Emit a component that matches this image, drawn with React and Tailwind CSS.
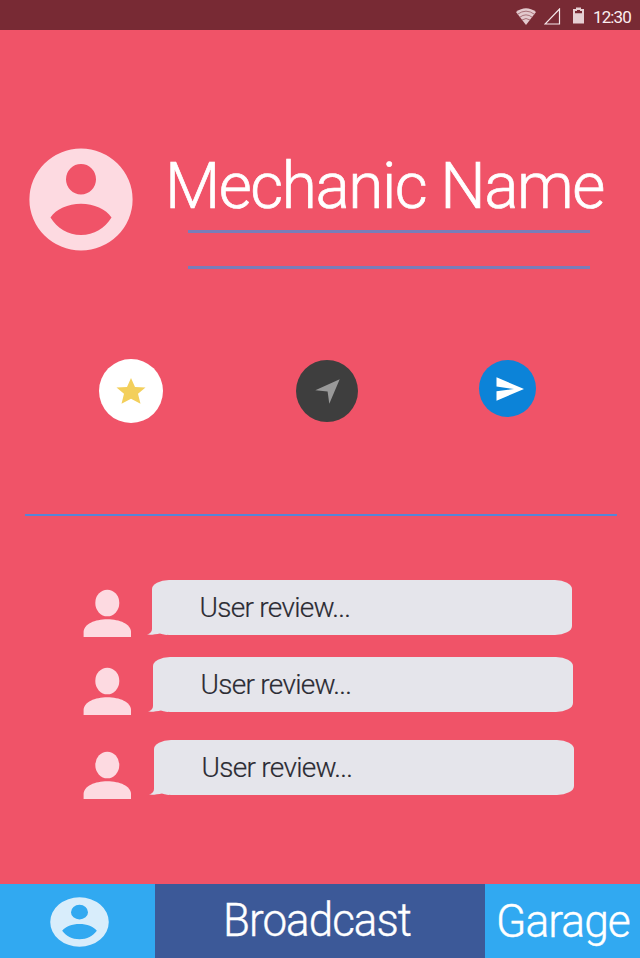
const ROBOTO = "font-['Roboto',sans-serif]";

function AccountCircle({ className }) {
  return (
    <svg className={className} viewBox="0 0 104 103" preserveAspectRatio="none" fill="currentColor">
      <path
        fillRule="evenodd"
        d="M52 0.5a51.6 51 0 1 0 0 102a51.6 51 0 1 0 0-102ZM52 16a15 15.2 0 1 1 0 30.4a15 15.2 0 1 1 0-30.4ZM21.5 69.5C27 61 39 55.700 52 55.700S77 61 82.500 69.500C76 80 65 87 52 87S28 80 21.500 69.500Z"
      />
    </svg>
  );
}

function Person() {
  return (
    <svg className="h-12 w-12 text-[#fddae1]" viewBox="0 0 48 48" fill="currentColor">
      <ellipse cx="24.300" cy="14" rx="12" ry="13.300" />
      <path d="M0.600 48V43C0.600 35 12 30.200 24.300 30.200S48 35 48 43V48Z" />
    </svg>
  );
}

function Review({ shift, top }) {
  return (
    <div className={`flex h-[57px] ${top}`}>
      <div className={shift.person}>
        <Person />
      </div>
      <div className={`relative flex h-[55px] w-[420px] items-center rounded-[17px/9px] bg-[#e5e5eb] pl-[47.5px] ${shift.bubble}`}>
        <svg className="absolute bottom-0 -left-[5px] h-5 w-6" viewBox="0 0 24 20" fill="#e5e5eb">
          <path d="M5 0V14C5 17 3 18.700 0 19.600C4 20 9 19.400 13.500 18.200L20 19.900L24 0Z" />
        </svg>
        <span className="relative text-[28px] leading-none font-light tracking-[-0.7px] whitespace-nowrap text-[#2b2b33] [-webkit-text-stroke:0.2px_#2b2b33]">
          User review...
        </span>
      </div>
    </div>
  );
}

const REVIEWS = [
  { person: "mt-[9px]", bubble: "ml-[21px]" },
  { person: "mt-[10px]", bubble: "ml-[22px]" },
  { person: "mt-[11px]", bubble: "ml-[23px]" },
];
const TOPS = ["", "mt-5", "mt-[26px]"];

export default function App() {
  return (
    <div className={`flex h-[958px] w-[640px] flex-col overflow-hidden bg-[#f05368] ${ROBOTO}`}>
      <header className="flex h-[30px] shrink-0 items-center bg-[#782a34] pl-[516px] text-[#e6cfd3]">
        <svg className="mt-[3px] h-[17px] w-[20px]" viewBox="0 0 20 17" fill="none">
          <path d="M0 4Q10-3.500 20 4L10 17Z" fill="#e3c9cd" />
          <path d="M1.500 6.300Q10 0 18.500 6.300M3.800 9.200Q10 4.500 16.200 9.200M6 12Q10 9 14 12" stroke="#a0666e" strokeWidth="0.900" />
        </svg>
        <svg className="mt-[2px] ml-2 h-[17px] w-[17px]" viewBox="0 0 17 17" fill="none" stroke="#f5e8ea" strokeWidth="1.200">
          <path d="M15.500 1V16H1Z" />
        </svg>
        <svg className="mt-[1px] ml-[11px] h-[17px] w-[13px]" viewBox="0 0 13 17">
          <path d="M1 2H4V0.500H9V2H12V16.500H1Z" fill="#e6cfd3" />
          <path d="M5 3H8V4H10V6.200H3V4H5Z" fill="#782a34" />
        </svg>
        <span className="mt-1 ml-2 text-[17px] leading-none tracking-[-0.9px] text-[#fbeef0]">12:30</span>
      </header>

      <section className="flex h-[242px] shrink-0 pl-[29px]">
        <AccountCircle className="mt-[118px] h-[103px] w-[104px] shrink-0 text-[#fddae1]" />
        <div className="ml-[29px] pt-[124px]">
          <h1 className="ml-[3px] origin-left scale-x-[0.983] text-[65px] leading-[65px] font-light tracking-[-1.5px] whitespace-nowrap text-white [-webkit-text-stroke:0.7px_white]">
            Mechanic Name
          </h1>
          <div className="mt-[11px] ml-[26px] h-[3px] w-[402px] bg-[#7a7db9]" />
          <div className="mt-[33px] ml-[26px] h-[3px] w-[402px] bg-[#7a7db9]" />
        </div>
      </section>

      <section className="flex h-[242px] shrink-0 items-start pt-[87px] pl-[98.500px]">
        <div className="flex h-16 w-16 items-center justify-center rounded-full bg-white">
          <svg className="h-[28px] w-[30px]" viewBox="0 0 30 28" fill="#f3cf5b">
            <path d="M15 0.900L19 10L29.500 10.500L22 16.800L24.500 26.700L15 21.700L5.500 26.700L8 16.800L0.500 10.500L11 10Z" />
          </svg>
        </div>
        <div className="mt-[1px] ml-[133.500px] flex h-[62px] w-[62px] items-center justify-center rounded-full bg-[#3e3e3e]">
          <svg className="mt-[1px] h-[25px] w-[25px]" viewBox="0 0 25 25" fill="#999">
            <path d="M24.700 0.300L14.300 24.700L12.600 12.400L0.300 11.300Z" />
          </svg>
        </div>
        <div className="mt-[1px] ml-[121px] flex h-[57px] w-[57px] items-center justify-center rounded-full bg-[#0c83d8]">
          <svg className="ml-[5px] h-6 w-[28px]" viewBox="0 0 28 24" fill="#fff">
            <path d="M0.500 0.300L28 12L0.500 23.800V14.200L18 12L0.500 9.500Z" />
          </svg>
        </div>
      </section>

      <div className="ml-[25px] h-[2px] w-[592px] shrink-0 bg-[#5585d8]" />

      <section className="flex h-[368px] shrink-0 flex-col pt-[64px] pl-[83px]">
        {REVIEWS.map((shift, i) => (
          <Review key={i} shift={shift} top={TOPS[i]} />
        ))}
      </section>

      <nav className="flex h-[74px] shrink-0 text-white">
        <div className="w-[155px] bg-[#31a9f1] pt-[13px] pl-[50px]">
          <AccountCircle className="h-[50px] w-[59px] text-[#d8edfb]" />
        </div>
        <div className="w-[330px] bg-[#3c5998] pt-[13px] pl-[68px]">
          <span className="block origin-left scale-x-[0.955] text-[46px] leading-[46px] font-light tracking-[-1px] whitespace-nowrap [-webkit-text-stroke:0.4px_white]">
            Broadcast
          </span>
        </div>
        <div className="w-[155px] bg-[#31a9f1] pt-[14px] pl-[11px]">
          <span className="block origin-left scale-x-[0.965] text-[46px] leading-[46px] font-light tracking-[-1px] whitespace-nowrap [-webkit-text-stroke:0.4px_white]">
            Garage
          </span>
        </div>
      </nav>
    </div>
  );
}
